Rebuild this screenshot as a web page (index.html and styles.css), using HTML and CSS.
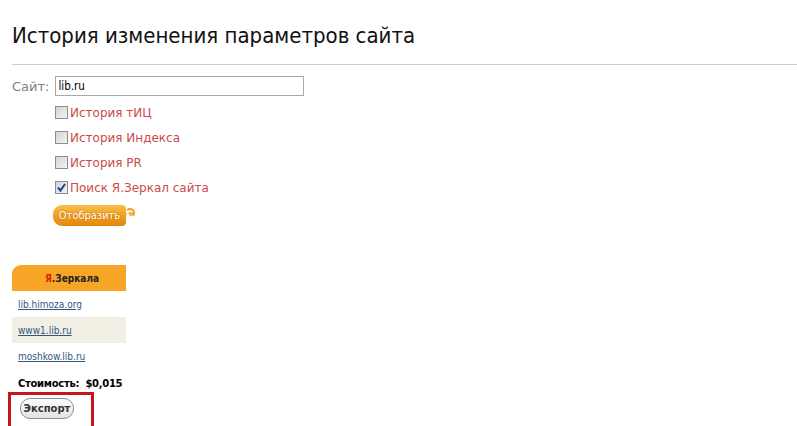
FILE: index.html
```html
<!DOCTYPE html>
<html lang="ru">
<head>
<meta charset="utf-8">
<title>История изменения параметров сайта</title>
<link rel="stylesheet" href="styles.css">
</head>
<body>
<div class="page">
  <h1 class="title">История изменения параметров сайта</h1>
  <div class="rule"></div>
  <form class="form">
    <div class="site-row">
      <span class="site-label">Сайт:</span>
      <input class="site-input" type="text" value="lib.ru">
    </div>
    <div class="opts">
      <div class="opt"><span class="cb"></span><span class="opt-text">История тИЦ</span></div>
      <div class="opt"><span class="cb"></span><span class="opt-text">История Индекса</span></div>
      <div class="opt"><span class="cb"></span><span class="opt-text">История PR</span></div>
      <div class="opt"><span class="cb cb-on"><svg viewBox="0 0 11 11" width="11" height="11"><path d="M2 5.5 L4.5 8.5 L9 2" fill="none" stroke="#1f3f8f" stroke-width="2"/></svg></span><span class="opt-text">Поиск Я.Зеркал сайта</span></div>
      <div class="show-wrap"><span class="show-btn">Отобразить</span><span class="swirl"></span></div>
    </div>
  </form>
  <table class="mirrors">
    <tr><th class="mirrors-head"><span class="ya">Я</span>.Зеркала</th></tr>
    <tr><td><a href="#">lib.himoza.org</a></td></tr>
    <tr class="alt"><td><a href="#">www1.lib.ru</a></td></tr>
    <tr><td><a href="#">moshkow.lib.ru</a></td></tr>
  </table>
  <div class="cost">Стоимость:&nbsp; $0,015</div>
  <div class="export-box"><span class="export-btn">Экспорт</span></div>
</div>
</body>
</html>
```

FILE: styles.css
```css
html, body {
  margin: 0;
  padding: 0;
  background: #fff;
}
.page {
  padding: 0 0 0 12px;
  font-family: "DejaVu Sans", Verdana, sans-serif;
}
.title {
  margin: 0;
  padding-top: 21px;
  font-family: "DejaVu Sans Condensed", "DejaVu Sans", sans-serif;
  font-size: 22px;
  font-weight: normal;
  color: #111;
  line-height: 30px;
}
.rule {
  margin-top: 13px;
  height: 1px;
  background: #cfcfcf;
}
.form {
  margin: 11px 0 0 0;
}
.site-row {
  display: flex;
  align-items: center;
  gap: 6px;
}
.site-label {
  font-size: 13px;
  color: #808080;
}
.site-input {
  box-sizing: border-box;
  width: 249px;
  height: 20px;
  margin: 0;
  padding: 1px 2px;
  border: 1px solid #a9a9a9;
  font-family: "DejaVu Sans Condensed", "DejaVu Sans", sans-serif;
  font-size: 11.5px;
  color: #000;
}
.opts {
  padding-left: 43px;
  padding-top: 4px;
}
.opt {
  display: flex;
  align-items: center;
  height: 25px;
  gap: 2px;
}
.cb {
  box-sizing: border-box;
  width: 13px;
  height: 13px;
  border: 1px solid #8d8d8d;
  background: linear-gradient(135deg, #d3d3d3, #f4f4f4);
  display: flex;
  align-items: center;
  justify-content: center;
}
.opt-text {
  font-size: 12px;
  color: #cc4a4a;
}
.show-wrap {
  position: relative;
  width: 82px;
  height: 21px;
  margin: 5px 0 0 -2px;
}
.show-btn {
  display: flex;
  align-items: center;
  justify-content: center;
  width: 73px;
  height: 21px;
  border-radius: 9px 4px 4px 9px;
  background: linear-gradient(#f9c04d, #f0a01e 50%, #e2870c);
  color: #fff;
  font-family: "DejaVu Sans Condensed", "DejaVu Sans", sans-serif;
  font-size: 11px;
  text-shadow: 0 0 2px #b06000;
}
.swirl {
  position: absolute;
  right: 0;
  top: 3px;
  width: 10px;
  height: 10px;
  border-radius: 50%;
  border: 2px solid #f29c1f;
  border-left-color: transparent;
  border-bottom-color: transparent;
  box-sizing: border-box;
  background: radial-gradient(circle at 60% 60%, #f6b74a 40%, transparent 45%);
}
.mirrors {
  margin-top: 39px;
  border-collapse: collapse;
  width: 114px;
  font-family: "DejaVu Sans Condensed", "DejaVu Sans", sans-serif;
  font-size: 10px;
}
.mirrors th, .mirrors td {
  padding: 0 0 0 6px;
  text-align: left;
}
.mirrors-head {
  height: 26px;
  background: #f6a526;
  border-top-left-radius: 9px;
  text-align: center !important;
  font-weight: bold;
  color: #222;
  font-size: 10px;
}
.ya {
  color: #d8200a;
}
.mirrors td {
  height: 26px;
}
.mirrors .alt td {
  background: #f1efe3;
}
.mirrors a {
  color: #35557f;
  text-decoration: underline;
}
.cost {
  padding: 9px 0 0 6px;
  height: 14px;
  line-height: 12px;
  font-size: 10px;
  font-weight: bold;
  letter-spacing: -0.3px;
  color: #000;
}
.export-box {
  margin-left: -4px;
  width: 86px;
  height: 40px;
  border: 3px solid #c4161c;
  box-sizing: border-box;
  padding: 3px 0 0 9px;
}
.export-btn {
  display: flex;
  align-items: center;
  justify-content: center;
  box-sizing: border-box;
  width: 54px;
  height: 21px;
  border: 1px solid #8f8f8f;
  border-radius: 10px;
  background: linear-gradient(#fdfdfd, #e2e2e2);
  font-size: 10px;
  font-weight: bold;
  color: #333;
}
```
